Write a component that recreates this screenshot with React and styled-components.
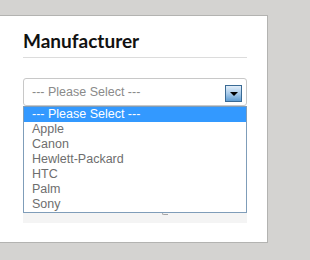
import React from "react";
import styled, { createGlobalStyle } from "styled-components";

const GlobalStyle = createGlobalStyle`
  html, body {
    margin: 0;
    padding: 0;
    background: #d4d3d1;
  }
  body {
    width: 310px;
    height: 260px;
    overflow: hidden;
  }
`;

const options = ["Apple", "Canon", "Hewlett-Packard", "HTC", "Palm", "Sony"];

const Card = styled.div`
  margin-top: 15px;
  width: 268px;
  height: 228px;
  box-sizing: border-box;
  background: #fff;
  border: 1px solid #b3b3b1;
  border-left: none;
  padding: 14px 20px 0 23px;
`;

const Title = styled.h2`
  margin: 0;
  font-family: "Lato", "Liberation Sans", sans-serif;
  font-weight: 700;
  font-size: 19px;
  line-height: 22px;
  color: #111;
  padding-bottom: 5px;
  border-bottom: 1px solid #dcdcdc;
`;

const Field = styled.div`
  position: relative;
  margin-top: 20px;
`;

const SelectBox = styled.div`
  height: 28px;
  box-sizing: border-box;
  border: 1px solid #c8c8c8;
  border-radius: 3px;
  display: flex;
  align-items: center;
  justify-content: space-between;
  padding: 0 4px 0 8px;
  font-family: "Liberation Sans", Arial, sans-serif;
  font-size: 12.5px;
  color: #8a8a8a;
`;

const ArrowButton = styled.span`
  width: 17px;
  height: 17px;
  box-sizing: border-box;
  border: 1px solid #3a6a94;
  background: linear-gradient(#e2eef9, #a9cbea 50%, #5f9dd3);
  display: flex;
  align-items: center;
  justify-content: center;
  margin-top: 2px;
`;

const Triangle = styled.span`
  width: 0;
  height: 0;
  border-left: 4px solid transparent;
  border-right: 4px solid transparent;
  border-top: 4px solid #000;
  margin-top: 1px;
`;

const Panel = styled.div`
  height: 117px;
  background: #f4f4f4;
`;

const List = styled.ul`
  position: absolute;
  left: 0;
  right: 0;
  top: 28px;
  margin: 0;
  padding: 0;
  list-style: none;
  background: #fff;
  border: 1px solid #7f9db9;
  font-family: "Liberation Sans", Arial, sans-serif;
  font-size: 12.5px;
`;

const Item = styled.li`
  height: 15px;
  line-height: 15px;
  padding-left: 8px;
  color: ${(p) => (p.$active ? "#fff" : "#6e6e6e")};
  background: ${(p) => (p.$active ? "#3399ff" : "transparent")};
`;

const Peek = styled.span`
  position: absolute;
  left: 139px;
  top: 134px;
  width: 5px;
  height: 2px;
  border-bottom: 1px solid #a6a6a6;
  border-left: 1px solid #a6a6a6;
  border-radius: 0 0 0 2px;
`;

export default function App() {
  return (
    <>
      <GlobalStyle />
      <Card>
        <Title>Manufacturer</Title>
        <Field>
          <SelectBox>
            <span>--- Please Select ---</span>
            <ArrowButton>
              <Triangle />
            </ArrowButton>
          </SelectBox>
          <Panel />
          <Peek />
          <List>
            <Item $active>--- Please Select ---</Item>
            {options.map((o) => (
              <Item key={o}>{o}</Item>
            ))}
          </List>
        </Field>
      </Card>
    </>
  );
}
